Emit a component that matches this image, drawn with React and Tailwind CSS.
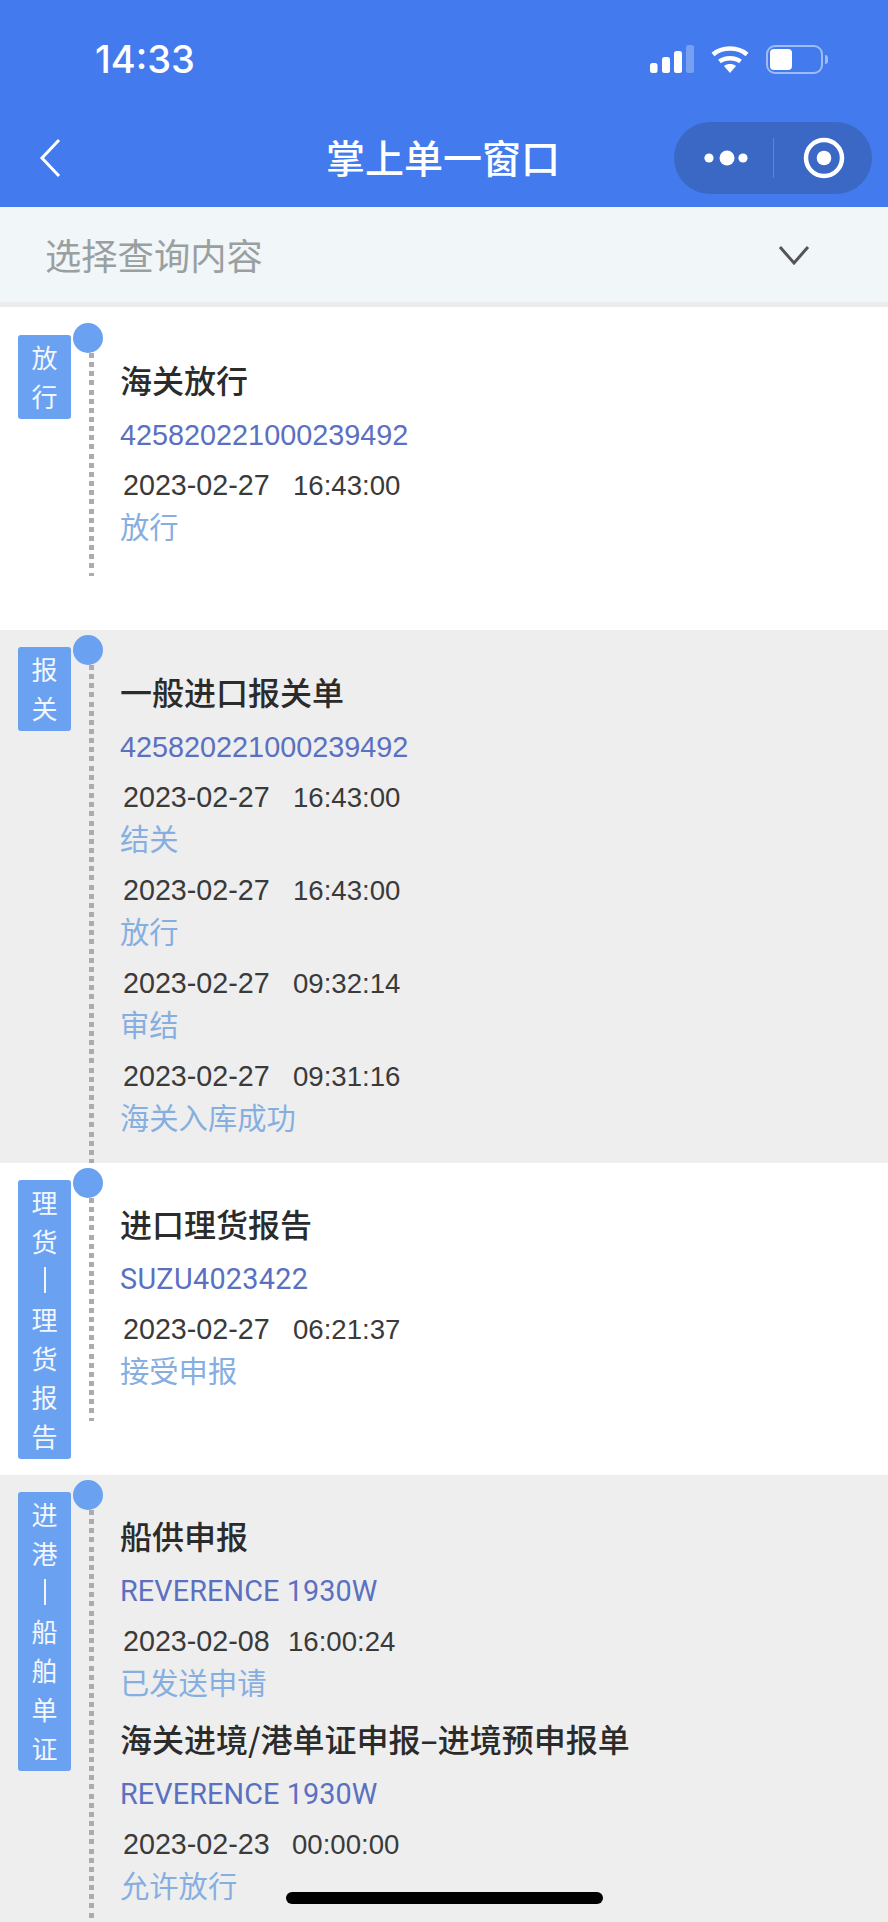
import React from 'react';

const cjk = "font-['Noto_Sans_CJK_SC',sans-serif]";
const latin = "font-['Liberation_Sans','Noto_Sans_CJK_SC',sans-serif]";

const sections = [
  {
    tag: '放行',
    line: 'short',
    bg: 'bg-white',
    pad: 'pt-[42px] pb-[25px]',
    docs: [
      {
        title: '海关放行',
        no: '425820221000239492',
        events: [{ date: '2023-02-27', time: '16:43:00', status: '放行' }],
      },
    ],
  },
  {
    tag: '报关',
    line: 'full',
    bg: 'bg-[#eeeeee]',
    pad: 'pt-[42px] pb-[27px]',
    docs: [
      {
        title: '一般进口报关单',
        no: '425820221000239492',
        events: [
          { date: '2023-02-27', time: '16:43:00', status: '结关' },
          { date: '2023-02-27', time: '16:43:00', status: '放行' },
          { date: '2023-02-27', time: '09:32:14', status: '审结' },
          { date: '2023-02-27', time: '09:31:16', status: '海关入库成功' },
        ],
      },
    ],
  },
  {
    tag: '理货|理货报告',
    line: 'short',
    bg: 'bg-white',
    pad: 'pt-[41px] pb-[25px]',
    docs: [
      {
        title: '进口理货报告',
        no: 'SUZU4023422',
        noClass: "font-['Roboto',sans-serif] tracking-[0.3px]",
        events: [{ date: '2023-02-27', time: '06:21:37', status: '接受申报' }],
      },
    ],
  },
  {
    tag: '进港|船舶单证',
    line: 'full',
    bg: 'bg-[#eeeeee] flex-1',
    pad: 'pt-[41px] pb-[25px]',
    docs: [
      {
        title: '船供申报',
        no: 'REVERENCE 1930W',
        noClass: "font-['Roboto',sans-serif] tracking-[0.1px]",
        events: [{ date: '2023-02-08', time: '16:00:24', status: '已发送申请', dateClass: 'w-[165px]' }],
      },
      {
        title: '海关进境/港单证申报–进境预申报单',
        no: 'REVERENCE 1930W',
        noClass: "font-['Roboto',sans-serif] tracking-[0.1px]",
        events: [{ date: '2023-02-23', time: '00:00:00', status: '允许放行', dateClass: 'w-[169px]' }],
      },
    ],
  },
];

function StatusBar() {
  return (
    <div className="h-[118px] flex items-center justify-between pl-[95px] pr-[60px]">
      <span className="font-['Inter',sans-serif] text-[38px] font-medium text-white leading-none">14:33</span>
      <div className="flex items-center">
        <svg width="44" height="28" viewBox="0 0 44 28" fill="#fff">
          <rect x="0" y="18" width="7.5" height="10" rx="2.5" />
          <rect x="12" y="12" width="8" height="16" rx="2.5" />
          <rect x="24" y="6" width="8" height="22" rx="2.5" />
          <rect x="36" y="0" width="8" height="28" rx="2.5" fill="#78a0f0" />
        </svg>
        <svg className="ml-[17px]" width="38" height="28" viewBox="0 0 38 28" fill="none" stroke="#fff" strokeWidth="4.5">
          <path d="M2 9.5C11 1.5 27 1.5 36 9.5" />
          <path d="M8.5 16.5C14 12 24 12 29.5 16.5" />
          <path d="M19 28l-6-7c3.5-2.6 8.5-2.6 12 0z" fill="#fff" stroke="none" />
        </svg>
        <div className="ml-[17px] w-[57px] h-[29px] rounded-[9px] border-2 border-[#9dbcf6] p-[2px]">
          <div className="w-[22px] h-full rounded-[4px] bg-white" />
        </div>
        <div className="ml-[2px] w-[3px] h-[9px] rounded-r-full bg-[#9dbcf6]" />
      </div>
    </div>
  );
}

function NavBar() {
  return (
    <div className="h-[80px] flex items-center pl-[38px] pr-[16px] relative">
      <svg width="24" height="40" viewBox="0 0 24 40" fill="none" stroke="#fff" strokeWidth="3">
        <path d="M21 2L4 20l17 18" />
      </svg>
      <h1 className={`absolute left-[326px] pb-[4px] text-[39px] leading-none font-medium text-white ${cjk}`}>掌上单一窗口</h1>
      <div className="ml-auto w-[198px] h-[72px] rounded-full bg-[#3a68c4] flex items-center">
        <svg className="ml-[26px]" width="52" height="16" viewBox="0 0 52 16" fill="#fff">
          <circle cx="9" cy="8" r="4.6" />
          <circle cx="27" cy="8" r="7.5" />
          <circle cx="43" cy="8" r="4.6" />
        </svg>
        <div className="ml-[21px] w-px h-[40px] bg-[#5f86d4]" />
        <svg className="ml-[29px]" width="42" height="42" viewBox="0 0 42 42" fill="none">
          <circle cx="21" cy="21" r="18" stroke="#fff" strokeWidth="4.5" />
          <circle cx="21" cy="21" r="7.3" fill="#fff" />
        </svg>
      </div>
    </div>
  );
}

function Filter() {
  return (
    <div className="h-[95px] shrink-0 bg-[#f1f6f9] border-b-[5px] border-[#ececec] box-content flex items-center justify-between pl-[45px] pr-[78px]">
      <span className={`text-[36.3px] leading-none text-[#9a9f9f] ${cjk}`}>选择查询内容</span>
      <svg width="32" height="20" viewBox="0 0 32 20" fill="none" stroke="#555" strokeWidth="3">
        <path d="M2 2l14 16L30 2" />
      </svg>
    </div>
  );
}

function Tag({ text }) {
  return (
    <div className={`mt-[17px] self-start w-[53px] pt-[2px] pb-[4px] rounded-[3px] bg-[#6aa1f0] text-center text-[26px] leading-[39px] text-[#f2f7ff] ${cjk}`}>
      {text.split('').map((c, i) => (
        <div key={i}>{c === '|' ? <span className="block w-[2px] h-[26px] my-[6.5px] mx-auto bg-[#f2f7ff]" /> : c}</div>
      ))}
    </div>
  );
}

function Doc({ doc, first }) {
  return (
    <div className={first ? '' : 'mt-[18px]'}>
      <div className={`-translate-y-px text-[32px] leading-[40px] font-medium text-[#2b2b2b] whitespace-nowrap ${cjk}`}>{doc.title}</div>
      <div className={`mt-[17px] text-[28.8px] leading-[36px] text-[#5b70c1] ${doc.noClass || latin}`}>{doc.no}</div>
      {doc.events.map((e, i) => (
        <div key={i} className={i > 0 ? 'mt-[15px]' : 'mt-[14px]'}>
          <div className={`h-[36px] pl-[3px] leading-[36px] text-[#3a3a3a] flex items-baseline ${latin}`}>
            <span className={`text-[28.7px] ${e.dateClass || 'w-[170px]'}`}>{e.date}</span>
            <span className="text-[27.6px]">{e.time}</span>
          </div>
          <div className={`mt-[6px] -translate-y-[2px] text-[29.3px] leading-[36px] text-[#86aee0] ${cjk}`}>{e.status}</div>
        </div>
      ))}
    </div>
  );
}

function Section({ item }) {
  return (
    <section className={`flex min-h-[312px] pl-[18px] ${item.bg}`}>
      <Tag text={item.tag} />
      <div className={`ml-[2px] mt-[5px] w-[30px] flex flex-col ${item.line === 'short' ? 'pb-[54px]' : ''}`}>
        <div className="w-[30px] h-[30px] shrink-0 rounded-full bg-[#6aa1f0]" />
        <div className="ml-[16px] w-[5px] flex-1 bg-[repeating-linear-gradient(to_bottom,#ababb0_0,#ababb0_5px,transparent_5px,transparent_9.15px)]" />
      </div>
      <div className={`ml-[17px] ${item.pad}`}>
        {item.docs.map((d, i) => (
          <Doc key={d.title} doc={d} first={i === 0} />
        ))}
      </div>
    </section>
  );
}

export default function App() {
  return (
    <div className="relative w-[888px] h-[1922px] overflow-hidden bg-white flex flex-col">
      <header className="h-[207px] shrink-0 bg-[#437bee]">
        <StatusBar />
        <NavBar />
      </header>
      <Filter />
      <main className="mt-[11px] flex-1 shrink-0 flex flex-col">
        {sections.map((s) => (
          <Section key={s.tag} item={s} />
        ))}
      </main>
      <div className="absolute left-[286px] top-[1892px] w-[317px] h-[12px] rounded-full bg-black" />
    </div>
  );
}
